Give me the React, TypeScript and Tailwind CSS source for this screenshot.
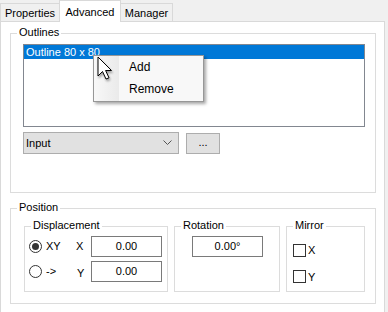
import React from 'react';

const font = { fontFamily: '"Liberation Sans", Arial, sans-serif' };

function GroupBox({ label, className, children }: { label: string; className?: string; children?: React.ReactNode }) {
  return (
    <div className={`relative border border-[#dcdcdc] ${className ?? ''}`}>
      <span className="absolute left-[6px] top-[-8px] bg-white px-[2px] leading-[13px] text-black">{label}</span>
      {children}
    </div>
  );
}

function TextBox({ value }: { value: string }) {
  return (
    <div className="flex h-[21px] w-[71px] items-center justify-center border border-[#7a7a7a] bg-white leading-none text-black">
      {value}
    </div>
  );
}

function Radio({ checked }: { checked?: boolean }) {
  return (
    <span className="flex h-[13px] w-[13px] items-center justify-center rounded-full border border-[#333] bg-white">
      {checked && <span className="h-[7px] w-[7px] rounded-full bg-[#333]" />}
    </span>
  );
}

function Check() {
  return <span className="h-[13px] w-[13px] border border-[#333] bg-white" />;
}

export default function App() {
  return (
    <div className="relative h-[312px] w-[388px] overflow-hidden bg-[#f0f0f0] text-[11px]" style={font}>
      {/* tabs */}
      <div className="flex h-[21px] items-end">
        <div className="flex h-[18px] w-[60px] items-center justify-center border border-b-0 border-[#d9d9d9] bg-[#f0f0f0] pt-[1px]">
          Properties
        </div>
        <div className="relative z-10 -mb-px flex h-[22px] w-[62px] items-start justify-center border border-b-0 border-[#d9d9d9] bg-white pt-[3px] -ml-px">
          Advanced
        </div>
        <div className="flex h-[18px] w-[52px] items-center justify-center border border-b-0 border-l-0 border-[#d9d9d9] bg-[#f0f0f0] pt-[1px]">
          Manager
        </div>
      </div>

      {/* tab page */}
      <div className="mr-[3px] h-[300px] border border-[#d9d9d9] bg-white">
        <GroupBox label="Outlines" className="ml-[9px] mr-[8px] mt-[11px] h-[160px]">
          <div className="ml-[12px] mt-[10px] h-[83px] w-[342px] border border-[#828790] bg-white">
            <div className="flex h-[14px] items-center bg-[#0078d7] pl-[2px] text-white">Outline 80 x 80</div>
          </div>
          <div className="ml-[12px] mt-[5px] flex items-start gap-[7px]">
            <div className="flex h-[22px] w-[156px] items-center justify-between border border-[#adadad] bg-[#e1e1e1] pl-[2px] pr-[6px]">
              <span>Input</span>
              <svg width="9" height="6" viewBox="0 0 9 6" fill="none" stroke="#555" strokeWidth="1">
                <path d="M0.5 0.5 L4.5 4.5 L8.5 0.5" />
              </svg>
            </div>
            <div className="mt-[1px] flex h-[21px] w-[34px] items-center justify-center border border-[#adadad] bg-[#e1e1e1] pb-[2px]">
              ...
            </div>
          </div>
        </GroupBox>

        <GroupBox label="Position" className="ml-[9px] mr-[8px] mt-[15px] h-[96px]">
          <div className="ml-[13px] mt-[17px] flex gap-[6px]">
            <GroupBox label="Displacement" className="h-[66px] w-[144px]">
              <div className="mt-[9px] flex items-center">
                <span className="ml-[4px]"><Radio checked /></span>
                <span className="ml-[4px] w-[30px]">XY</span>
                <span className="w-[15px]">X</span>
                <TextBox value="0.00" />
              </div>
              <div className="mt-[4px] flex items-center">
                <span className="ml-[4px]"><Radio /></span>
                <span className="ml-[4px] w-[31px]">-&gt;</span>
                <span className="w-[14px] pt-[3px]">Y</span>
                <TextBox value="0.00" />
              </div>
            </GroupBox>
            <GroupBox label="Rotation" className="h-[66px] w-[106px]">
              <div className="ml-[17px] mt-[9px]">
                <TextBox value="0.00°" />
              </div>
            </GroupBox>
            <GroupBox label="Mirror" className="h-[66px] w-[79px]">
              <div className="ml-[6px] mt-[15px] flex items-center gap-[2px]">
                <Check />
                <span>X</span>
              </div>
              <div className="ml-[6px] mt-[10px] flex items-center gap-[2px]">
                <Check />
                <span>Y</span>
              </div>
            </GroupBox>
          </div>
        </GroupBox>
      </div>

      {/* context menu */}
      <div className="absolute left-[93px] top-[55px] z-20 flex h-[47px] w-[111px] border border-[#979797] bg-[#f8f8f8] shadow-[2px_2px_3px_rgba(0,0,0,0.35)]">
        <div className="w-[25px] bg-gradient-to-r from-[#f8f8f8] to-[#eaeaea]" />
        <div className="flex flex-1 flex-col pl-[10px] text-[12px]">
          <div className="flex h-[22px] items-center">Add</div>
          <div className="flex h-[22px] items-center">Remove</div>
        </div>
      </div>

      {/* cursor */}
      <svg
        className="absolute left-[97px] top-[56px] z-30 drop-shadow-[1px_2px_1px_rgba(0,0,0,0.35)]"
        width="17"
        height="26"
        viewBox="0 0 17 26"
      >
        <path
          d="M1 1 L1 20 L5.5 15.5 L9 23 L12 21.8 L8.6 14.5 L14.5 14.5 Z"
          fill="white"
          stroke="black"
          strokeWidth="1"
          strokeLinejoin="miter"
        />
      </svg>
    </div>
  );
}
